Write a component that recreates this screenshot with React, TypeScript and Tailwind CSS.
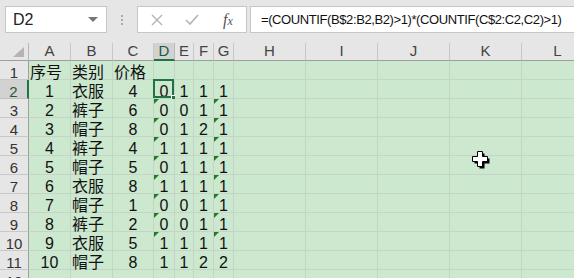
import React from 'react';

const font = { fontFamily: '"Liberation Sans", "Noto Sans CJK SC", Arial, sans-serif' };

const cols = ['A', 'B', 'C', 'D', 'E', 'F', 'G', 'H', 'I', 'J', 'K', 'L'];

const rows: (string | number)[][] = [
  ['序号', '类别', '价格', '', '', '', ''],
  [1, '衣服', 4, 0, 1, 1, 1],
  [2, '裤子', 6, 0, 0, 1, 1],
  [3, '帽子', 8, 0, 1, 2, 1],
  [4, '裤子', 4, 1, 1, 1, 1],
  [5, '帽子', 5, 0, 1, 1, 1],
  [6, '衣服', 8, 1, 1, 1, 1],
  [7, '帽子', 1, 0, 0, 1, 1],
  [8, '裤子', 2, 0, 0, 1, 1],
  [9, '衣服', 5, 1, 1, 1, 1],
  [10, '帽子', 8, 1, 1, 2, 2],
  ['', '', '', '', '', '', ''],
];

function Flag() {
  return <span className="absolute left-0 top-0 w-0 h-0 border-t-[5px] border-r-[5px] border-t-[#1e7d1e] border-r-transparent" />;
}

export default function App() {
  return (
    <div className="w-[574px] h-[278px] overflow-hidden bg-[#e6e6e6] relative" style={font}>
      {/* formula bar */}
      <div className="flex h-[43px] pt-[6px] pl-[5px]">
        <div className="shrink-0 w-[102px] h-[27px] bg-white border border-[#c6c6c6] flex items-center justify-between pl-[7px] pr-[8px]">
          <span className="text-[16px] text-[#222]">D2</span>
          <span className="w-0 h-0 border-l-[5px] border-r-[5px] border-t-[5px] border-l-transparent border-r-transparent border-t-[#777]" />
        </div>
        <div className="shrink-0 w-[30px] flex flex-col items-center justify-center gap-[2px] h-[27px]">
          <span className="w-[2px] h-[2px] bg-[#aaa]" />
          <span className="w-[2px] h-[2px] bg-[#aaa]" />
          <span className="w-[2px] h-[2px] bg-[#aaa]" />
        </div>
        <div className="shrink-0 w-[110px] h-[27px] bg-white border border-[#c6c6c6] flex items-center pl-[13px]">
          <svg width="12" height="12" viewBox="0 0 12 12" className="mr-[22px]">
            <path d="M1 1L11 11M11 1L1 11" stroke="#b4b4b4" strokeWidth="1.4" />
          </svg>
          <svg width="14" height="12" viewBox="0 0 14 12" className="mr-[24px]">
            <path d="M1 6L5 10L13 1" stroke="#b4b4b4" strokeWidth="1.6" fill="none" />
          </svg>
          <span className="text-[16px] italic text-[#555]" style={{ fontFamily: '"Liberation Serif", serif' }}>
            f<span className="text-[12px]">x</span>
          </span>
        </div>
        <div className="ml-[3px] flex-1 min-w-0 overflow-hidden h-[27px] bg-white border border-[#c6c6c6] border-r-0 flex items-center pl-[10px] whitespace-nowrap">
          <span className="text-[13px] tracking-[-0.4px] text-[#111]">=(COUNTIF(B$2:B2,B2)&gt;1)*(COUNTIF(C$2:C2,C2)&gt;1)</span>
        </div>
      </div>

      {/* sheet */}
      <div className="grid grid-cols-[29px_42px_42px_41px_21px_19px_20px_20px_72px_72px_72px_72px_72px] grid-rows-[18px_repeat(12,19px)] w-[612px]">
        <div className="relative border-r border-b border-r-[#b8b8b8] border-b-[#9e9e9e] bg-[#e6e6e6]">
          <span className="absolute right-[4px] bottom-[3px] w-0 h-0 border-b-[10px] border-l-[11px] border-b-[#b4b4b4] border-l-transparent" />
        </div>
        {cols.map((c) => (
          <div
            key={c}
            className={
              c === 'D'
                ? 'flex items-center justify-center text-[15px] text-[#1c5c3a] bg-[#d2d2d2] border-r border-r-[#b8b8b8] border-b-2 border-b-[#217346]'
                : 'flex items-center justify-center text-[15px] text-[#444] bg-[#e6e6e6] border-r border-r-[#c8c8c8] border-b border-b-[#9e9e9e]'
            }
          >
            {c}
          </div>
        ))}
        {rows.map((r, ri) => {
          const rowNum = ri + 1;
          return (
            <React.Fragment key={ri}>
              <div
                className={
                  rowNum === 2
                    ? 'flex items-end justify-center leading-[13px] text-[15px] text-[#1c5c3a] bg-[#d2d2d2] border-b border-b-[#c0c0c0] border-r-2 border-r-[#217346]'
                    : 'flex items-end justify-center leading-[13px] text-[15px] text-[#333] bg-[#e6e6e6] border-b border-b-[#c8c8c8] border-r border-r-[#9e9e9e]'
                }
              >
                {rowNum}
              </div>
              {cols.map((c, ci) => {
                const v = ci < r.length ? r[ci] : '';
                const isText = typeof v === 'string' && v !== '';
                const selected = rowNum === 2 && c === 'D';
                const flag = rowNum >= 3 && rowNum <= 10 && (c === 'D' || c === 'G');
                return (
                  <div
                    key={c}
                    className={
                      'relative flex items-end leading-[13px] text-[16px] text-[#111] bg-[#cce8cf] border-r border-b border-[#c6d3c8] ' +
                      (isText ? 'justify-start pl-[1px]' : 'justify-center')
                    }
                  >
                    {flag && <Flag />}
                    {v}
                    {selected && (
                      <>
                        <span className="absolute -left-[1px] -top-[1px] right-0 bottom-0 border-2 border-[#217346] pointer-events-none" />
                        <span className="absolute -right-[3px] -bottom-[3px] w-[6px] h-[6px] bg-[#217346] border border-white" />
                      </>
                    )}
                  </div>
                );
              })}
            </React.Fragment>
          );
        })}
      </div>

      {/* cursor */}
      <svg className="absolute left-[472px] top-[151px]" width="19" height="19" viewBox="0 0 19 19">
        <path d="M6 1H11V6H16V11H11V16H6V11H1V6H6Z" transform="translate(1.5 1.5)" fill="#000" />
        <path d="M5.5 0.5H10.5V5.5H15.5V10.5H10.5V15.5H5.5V10.5H0.5V5.5H5.5Z" fill="#fff" stroke="#000" strokeWidth="1" />
      </svg>
    </div>
  );
}
